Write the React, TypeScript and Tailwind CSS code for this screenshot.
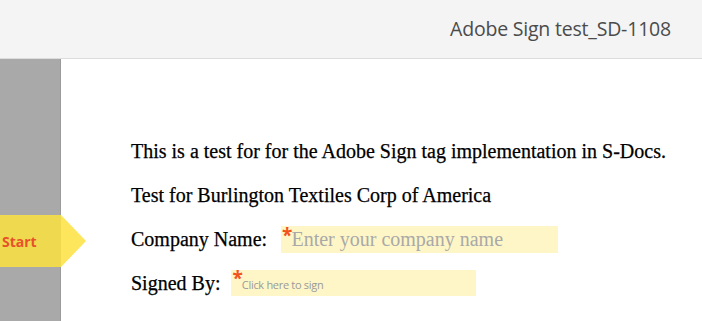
import React from 'react';

const serif = { fontFamily: '"Liberation Serif", "Times New Roman", serif' };
const sans = { fontFamily: '"Open Sans", "Noto Sans", sans-serif' };

export default function App() {
  return (
    <div className="relative w-[702px] h-[321px] overflow-hidden bg-white">
      {/* Header */}
      <div className="h-[59px] bg-[#f4f4f4] border-b border-[#dcdcdc] flex items-center justify-end pr-[31px]">
        <span className="text-[19.5px] text-[#4b4b4b] tracking-[-0.2px]" style={sans}>
          Adobe Sign test_SD-1108
        </span>
      </div>

      <div className="flex h-[262px]">
        {/* Gray rail */}
        <div className="w-[61px] shrink-0 bg-[#a9a9a9] border-r border-[#9b9b9b]" />

        {/* Document */}
        <div className="flex-1 pl-[70px] pt-[70px] text-[20px] text-black [-webkit-text-stroke:0.25px_black]" style={serif}>
          <div className="h-[44px] flex items-center whitespace-nowrap">
            This is a test for for the Adobe Sign tag implementation in S-Docs.
          </div>
          <div className="h-[44px] flex items-center">Test for Burlington Textiles Corp of America</div>
          <div className="h-[44px] flex items-center">
            <span>Company Name:</span>
            <div className="ml-[14px] w-[277px] h-[27px] bg-[#fef6c6] flex items-start pl-[1px] [-webkit-text-stroke:0]">
              <span className="text-[#f2521e] text-[19px] leading-none font-bold tracking-[-1px]" style={sans}>*</span>
              <span className="text-[20px] leading-[27px] text-[#a9a9a9]">Enter your company name</span>
            </div>
          </div>
          <div className="h-[44px] flex items-center">
            <span>Signed By:</span>
            <div className="ml-[11px] w-[245px] h-[26px] bg-[#fef6c6] flex items-start pl-[1px] [-webkit-text-stroke:0]">
              <span className="text-[#f2521e] text-[19px] leading-none font-bold mt-[-1px] tracking-[-1px]" style={sans}>*</span>
              <span className="text-[11px] leading-[26px] pt-[2px] text-[#9a9a9a] tracking-[-0.3px]" style={sans}>
                Click here to sign
              </span>
            </div>
          </div>
        </div>
      </div>

      {/* Start tag */}
      <div className="absolute left-0 top-[215px] flex items-stretch h-[52px]">
        <div className="w-[61px] bg-[#efd94f] flex items-center pl-[2px]">
          <span className="text-[14px] font-bold text-[#e8522a]" style={sans}>
            Start
          </span>
        </div>
        <div className="w-0 h-0 border-y-[26px] border-y-transparent border-l-[25px] border-l-[#fde55c]" />
      </div>
    </div>
  );
}
